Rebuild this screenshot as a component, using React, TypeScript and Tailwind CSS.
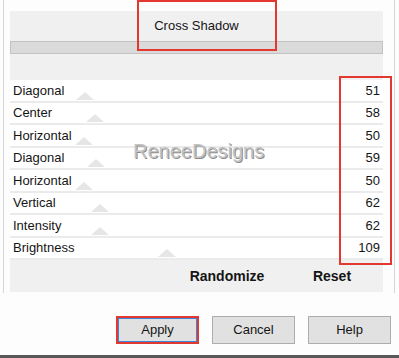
import React from "react";

const rows: { label: string; value: number }[] = [
  { label: "Diagonal", value: 51 },
  { label: "Center", value: 58 },
  { label: "Horizontal", value: 50 },
  { label: "Diagonal", value: 59 },
  { label: "Horizontal", value: 50 },
  { label: "Vertical", value: 62 },
  { label: "Intensity", value: 62 },
  { label: "Brightness", value: 109 },
];

function Thumb({ value }: { value: number }) {
  const left = 3 + value * 1.41 - 9;
  return (
    <svg
      className="absolute bottom-[1px]"
      style={{ left }}
      width="18"
      height="8"
      viewBox="0 0 18 8"
    >
      <polygon points="0,8 9,0 18,8" fill="#e6e6e6" />
    </svg>
  );
}

export default function App() {
  return (
    <div className="relative flex h-[358px] w-[399px] flex-col overflow-hidden bg-[#fdfdfd] font-['Liberation_Sans',Arial,sans-serif] text-[13px] text-[#151515]">
      <div className="ml-[3px] h-[293px] w-[392px] border-l border-r border-[#d6d6d6] pl-[6px] pr-[11px] pt-[11px]">
        <div className="flex h-[281px] flex-col bg-[#f0f0f0]">
          <div className="flex h-[30px] items-center justify-center">Cross Shadow</div>
          <div className="h-[13px] border border-[#c2c2c2] bg-[#dadada]" />
          <div className="h-[26px]" />
          <div className="flex flex-col">
            {rows.map((r, i) => (
              <div
                key={i}
                className="relative flex h-[22.5px] items-center justify-between border-b-2 border-[#ebebeb] bg-white pl-[3px] pr-[3px]"
              >
                <Thumb value={r.value} />
                <span className="relative">{r.label}</span>
                <span className="relative">{r.value}</span>
              </div>
            ))}
          </div>
          <div className="flex h-[32px] items-center justify-end gap-[30px] pr-[21px]">
            <div className="flex w-[90px] justify-center text-[14px] font-bold">Randomize</div>
            <div className="flex w-[60px] justify-center text-[14px] font-bold">Reset</div>
          </div>
        </div>
      </div>

      <div className="mt-[23px] flex justify-end gap-[13px] pr-[8px]">
        <div className="flex h-[28px] w-[83px] items-center justify-center border-2 border-[#e2382f] bg-[#e1e1e1] shadow-[inset_0_0_0_1px_#3d85d8]">
          Apply
        </div>
        <div className="flex h-[28px] w-[83px] items-center justify-center border border-[#adadad] bg-[#e1e1e1]">
          Cancel
        </div>
        <div className="flex h-[28px] w-[83px] items-center justify-center border border-[#adadad] bg-[#e1e1e1]">
          Help
        </div>
      </div>

      <div className="mt-auto h-[3px] bg-[#595959]" />

      <div className="pointer-events-none absolute left-[133px] top-[140px] text-[20px] leading-[23px] text-[#c4c4c4] [text-shadow:1px_1px_0_#8c8c8c]">
        ReneeDesigns
      </div>
      <div className="pointer-events-none absolute left-[137px] top-0 h-[51px] w-[140px] border-2 border-[#e2382f]" />
      <div className="pointer-events-none absolute left-[339px] top-[76px] h-[189px] w-[53px] border-2 border-[#e2382f]" />
    </div>
  );
}
